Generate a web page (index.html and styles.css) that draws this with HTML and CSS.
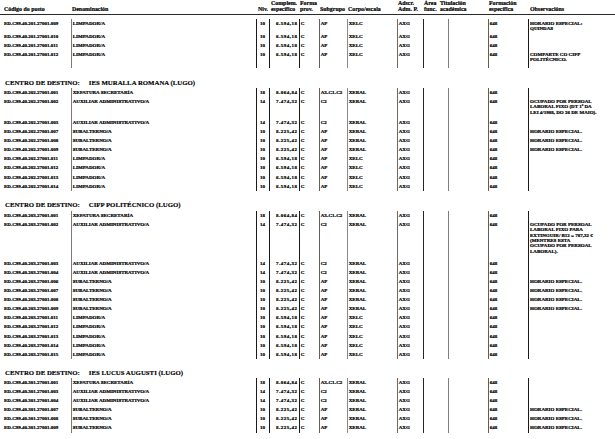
FILE: index.html
```html
<!DOCTYPE html>
<html lang="gl">
<head>
<meta charset="utf-8">
<title>Relación de postos</title>
<link rel="stylesheet" href="styles.css">
</head>
<body>
<div class="page">
  <table class="grid head">
    <colgroup><col class="c1"><col class="c2"><col class="c3"><col class="c4"><col class="c5"><col class="c6"><col class="c7"><col class="c8"><col class="c9"><col class="c10"><col class="c11"><col class="c12"></colgroup>
    <tr>
      <th class="t-code">Código do posto</th>
      <th class="t-den">Denominación</th>
      <th class="t-niv">Niv.</th>
      <th class="t-comp">Complem.<br>específico</th>
      <th class="t-forma">Forma<br>prov.</th>
      <th class="t-sub">Subgrupo</th>
      <th class="t-corpo">Corpo/escala</th>
      <th class="t-adscr">Adscr.<br>Adm. P.</th>
      <th class="t-area">Área<br>func.</th>
      <th class="t-tit">Titulación<br>académica</th>
      <th class="t-form">Formación<br>específica</th>
      <th class="t-obs">Observacións</th>
    </tr>
  </table>

  <section class="centro first">
    <table class="grid body">
      <colgroup><col class="c1"><col class="c2"><col class="c3"><col class="c4"><col class="c5"><col class="c6"><col class="c7"><col class="c8"><col class="c9"><col class="c10"><col class="c11"><col class="c12"></colgroup>
      <tr class="h13"><td>ED.C99.40.201.27001.009</td><td>LIMPADOR/A</td><td>10</td><td>6.594,18</td><td>C</td><td>AP</td><td>XELC</td><td>AXG</td><td></td><td></td><td>648</td><td>HORARIO ESPECIAL:<br>QUINDAS</td></tr>
      <tr><td>ED.C99.40.201.27001.010</td><td>LIMPADOR/A</td><td>10</td><td>6.594,18</td><td>C</td><td>AP</td><td>XELC</td><td>AXG</td><td></td><td></td><td>648</td><td></td></tr>
      <tr><td>ED.C99.40.201.27001.011</td><td>LIMPADOR/A</td><td>10</td><td>6.594,18</td><td>C</td><td>AP</td><td>XELC</td><td>AXG</td><td></td><td></td><td>648</td><td></td></tr>
      <tr class="h17"><td>ED.C99.40.201.27001.012</td><td>LIMPADOR/A</td><td>10</td><td>6.594,18</td><td>C</td><td>AP</td><td>XELC</td><td>AXG</td><td></td><td></td><td>648</td><td>COMPARTE CO CIFP<br>POLITÉCNICO.</td></tr>
    </table>
  </section>

  <section class="centro">
    <h2 class="centro-title">CENTRO DE DESTINO:<span class="centro-name">IES MURALLA ROMANA (LUGO)</span></h2>
    <table class="grid body">
      <colgroup><col class="c1"><col class="c2"><col class="c3"><col class="c4"><col class="c5"><col class="c6"><col class="c7"><col class="c8"><col class="c9"><col class="c10"><col class="c11"><col class="c12"></colgroup>
      <tr><td>ED.C99.40.202.27001.001</td><td>XEFATURA SECRETARÍA</td><td>18</td><td>8.064,84</td><td>C</td><td>A3-C1-C2</td><td>XERAL</td><td>AXG</td><td></td><td></td><td>648</td><td></td></tr>
      <tr class="h21"><td>ED.C99.40.202.27001.002</td><td>AUXILIAR ADMINISTRATIVO/A</td><td>14</td><td>7.474,32</td><td>C</td><td>C2</td><td>XERAL</td><td>AXG</td><td></td><td></td><td>648</td><td>OCUPADO POR PERSOAL<br>LABORAL FIXO (DT 1ª DA<br>LEI 4/1988, DO 26 DE MAIO).</td></tr>
      <tr><td>ED.C99.40.202.27001.003</td><td>AUXILIAR ADMINISTRATIVO/A</td><td>14</td><td>7.474,32</td><td>C</td><td>C2</td><td>XERAL</td><td>AXG</td><td></td><td></td><td>648</td><td></td></tr>
      <tr><td>ED.C99.40.202.27001.007</td><td>SUBALTERNO/A</td><td>10</td><td>8.225,42</td><td>C</td><td>AP</td><td>XERAL</td><td>AXG</td><td></td><td></td><td>648</td><td>HORARIO ESPECIAL.</td></tr>
      <tr><td>ED.C99.40.202.27001.008</td><td>SUBALTERNO/A</td><td>10</td><td>8.225,42</td><td>C</td><td>AP</td><td>XERAL</td><td>AXG</td><td></td><td></td><td>648</td><td>HORARIO ESPECIAL.</td></tr>
      <tr><td>ED.C99.40.202.27001.009</td><td>SUBALTERNO/A</td><td>10</td><td>8.225,42</td><td>C</td><td>AP</td><td>XERAL</td><td>AXG</td><td></td><td></td><td>648</td><td>HORARIO ESPECIAL.</td></tr>
      <tr><td>ED.C99.40.202.27001.011</td><td>LIMPADOR/A</td><td>10</td><td>6.594,18</td><td>C</td><td>AP</td><td>XELC</td><td>AXG</td><td></td><td></td><td>648</td><td></td></tr>
      <tr><td>ED.C99.40.202.27001.012</td><td>LIMPADOR/A</td><td>10</td><td>6.594,18</td><td>C</td><td>AP</td><td>XELC</td><td>AXG</td><td></td><td></td><td>648</td><td></td></tr>
      <tr><td>ED.C99.40.202.27001.013</td><td>LIMPADOR/A</td><td>10</td><td>6.594,18</td><td>C</td><td>AP</td><td>XELC</td><td>AXG</td><td></td><td></td><td>648</td><td></td></tr>
      <tr><td>ED.C99.40.202.27001.014</td><td>LIMPADOR/A</td><td>10</td><td>6.594,18</td><td>C</td><td>AP</td><td>XELC</td><td>AXG</td><td></td><td></td><td>648</td><td></td></tr>
    </table>
  </section>

  <section class="centro">
    <h2 class="centro-title">CENTRO DE DESTINO:<span class="centro-name">CIFP POLITÉCNICO (LUGO)</span></h2>
    <table class="grid body">
      <colgroup><col class="c1"><col class="c2"><col class="c3"><col class="c4"><col class="c5"><col class="c6"><col class="c7"><col class="c8"><col class="c9"><col class="c10"><col class="c11"><col class="c12"></colgroup>
      <tr><td>ED.C99.40.203.27001.001</td><td>XEFATURA SECRETARÍA</td><td>18</td><td>8.064,84</td><td>C</td><td>A3-C1-C2</td><td>XERAL</td><td>AXG</td><td></td><td></td><td>648</td><td></td></tr>
      <tr class="h39"><td>ED.C99.40.203.27001.002</td><td>AUXILIAR ADMINISTRATIVO/A</td><td>14</td><td>7.474,32</td><td>C</td><td>C2</td><td>XERAL</td><td>AXG</td><td></td><td></td><td>648</td><td>OCUPADO POR PERSOAL<br>LABORAL FIXO PARA<br>EXTINGUIR/ B12 = 787,32 €<br>(MENTRES ESTA<br>OCUPADO POR PERSOAL<br>LABORAL).</td></tr>
      <tr><td>ED.C99.40.203.27001.003</td><td>AUXILIAR ADMINISTRATIVO/A</td><td>14</td><td>7.474,32</td><td>C</td><td>C2</td><td>XERAL</td><td>AXG</td><td></td><td></td><td>648</td><td></td></tr>
      <tr><td>ED.C99.40.203.27001.004</td><td>AUXILIAR ADMINISTRATIVO/A</td><td>14</td><td>7.474,32</td><td>C</td><td>C2</td><td>XERAL</td><td>AXG</td><td></td><td></td><td>648</td><td></td></tr>
      <tr><td>ED.C99.40.203.27001.006</td><td>SUBALTERNO/A</td><td>10</td><td>8.225,42</td><td>C</td><td>AP</td><td>XERAL</td><td>AXG</td><td></td><td></td><td>648</td><td>HORARIO ESPECIAL.</td></tr>
      <tr><td>ED.C99.40.203.27001.007</td><td>SUBALTERNO/A</td><td>10</td><td>8.225,42</td><td>C</td><td>AP</td><td>XERAL</td><td>AXG</td><td></td><td></td><td>648</td><td>HORARIO ESPECIAL.</td></tr>
      <tr><td>ED.C99.40.203.27001.008</td><td>SUBALTERNO/A</td><td>10</td><td>8.225,42</td><td>C</td><td>AP</td><td>XERAL</td><td>AXG</td><td></td><td></td><td>648</td><td>HORARIO ESPECIAL.</td></tr>
      <tr><td>ED.C99.40.203.27001.009</td><td>SUBALTERNO/A</td><td>10</td><td>8.225,42</td><td>C</td><td>AP</td><td>XERAL</td><td>AXG</td><td></td><td></td><td>648</td><td>HORARIO ESPECIAL.</td></tr>
      <tr><td>ED.C99.40.203.27001.011</td><td>LIMPADOR/A</td><td>10</td><td>6.594,18</td><td>C</td><td>AP</td><td>XELC</td><td>AXG</td><td></td><td></td><td>648</td><td></td></tr>
      <tr><td>ED.C99.40.203.27001.012</td><td>LIMPADOR/A</td><td>10</td><td>6.594,18</td><td>C</td><td>AP</td><td>XELC</td><td>AXG</td><td></td><td></td><td>648</td><td></td></tr>
      <tr><td>ED.C99.40.203.27001.013</td><td>LIMPADOR/A</td><td>10</td><td>6.594,18</td><td>C</td><td>AP</td><td>XELC</td><td>AXG</td><td></td><td></td><td>648</td><td></td></tr>
      <tr><td>ED.C99.40.203.27001.014</td><td>LIMPADOR/A</td><td>10</td><td>6.594,18</td><td>C</td><td>AP</td><td>XELC</td><td>AXG</td><td></td><td></td><td>648</td><td></td></tr>
      <tr><td>ED.C99.40.203.27001.015</td><td>LIMPADOR/A</td><td>10</td><td>6.594,18</td><td>C</td><td>AP</td><td>XELC</td><td>AXG</td><td></td><td></td><td>648</td><td></td></tr>
    </table>
  </section>

  <section class="centro last">
    <h2 class="centro-title">CENTRO DE DESTINO:<span class="centro-name">IES LUCUS AUGUSTI (LUGO)</span></h2>
    <table class="grid body">
      <colgroup><col class="c1"><col class="c2"><col class="c3"><col class="c4"><col class="c5"><col class="c6"><col class="c7"><col class="c8"><col class="c9"><col class="c10"><col class="c11"><col class="c12"></colgroup>
      <tr><td>ED.C99.40.301.27001.001</td><td>XEFATURA SECRETARÍA</td><td>18</td><td>8.064,84</td><td>C</td><td>A3-C1-C2</td><td>XERAL</td><td>AXG</td><td></td><td></td><td>648</td><td></td></tr>
      <tr><td>ED.C99.40.301.27001.003</td><td>AUXILIAR ADMINISTRATIVO/A</td><td>14</td><td>7.474,32</td><td>C</td><td>C2</td><td>XERAL</td><td>AXG</td><td></td><td></td><td>648</td><td></td></tr>
      <tr><td>ED.C99.40.301.27001.004</td><td>AUXILIAR ADMINISTRATIVO/A</td><td>14</td><td>7.474,32</td><td>C</td><td>C2</td><td>XERAL</td><td>AXG</td><td></td><td></td><td>648</td><td></td></tr>
      <tr><td>ED.C99.40.301.27001.007</td><td>SUBALTERNO/A</td><td>10</td><td>8.225,42</td><td>C</td><td>AP</td><td>XERAL</td><td>AXG</td><td></td><td></td><td>648</td><td>HORARIO ESPECIAL.</td></tr>
      <tr><td>ED.C99.40.301.27001.008</td><td>SUBALTERNO/A</td><td>10</td><td>8.225,42</td><td>C</td><td>AP</td><td>XERAL</td><td>AXG</td><td></td><td></td><td>648</td><td>HORARIO ESPECIAL.</td></tr>
      <tr><td>ED.C99.40.301.27001.009</td><td>SUBALTERNO/A</td><td>10</td><td>8.225,42</td><td>C</td><td>AP</td><td>XERAL</td><td>AXG</td><td></td><td></td><td>648</td><td>HORARIO ESPECIAL.</td></tr>
    </table>
  </section>
</div>
</body>
</html>
```

FILE: styles.css
```css
html, body {
  margin: 0;
  padding: 0;
  background: #ffffff;
}

body {
  font-family: "Liberation Serif", "Times New Roman", serif;
  color: #000;
  overflow: hidden;
}

.page {
  width: 615px;
  height: 439px;
  overflow: hidden;
}

.grid {
  width: 615px;
  table-layout: fixed;
  border-collapse: collapse;
  border-spacing: 0;
}

.c1 { width: 71px; }
.c2 { width: 185px; }
.c3 { width: 13px; }
.c4 { width: 30px; }
.c5 { width: 20px; }
.c6 { width: 28px; }
.c7 { width: 50px; }
.c8 { width: 26px; }
.c9 { width: 25px; }
.c10 { width: 40px; }
.c11 { width: 40px; }
.c12 { width: 87px; }

/* Header */
.head {
  height: 14px;
  border-bottom: 1px solid #2a2a2a;
  margin-bottom: 4.5px;
}

.head th {
  font-size: 5.9px;
  line-height: 6.4px;
  font-weight: bold;
  text-align: left;
  vertical-align: bottom;
  padding: 0 0 0.8px 1px;
  white-space: nowrap;
  overflow: visible;
  -webkit-text-stroke: 0.2px #000;
}

.head .t-code { padding-left: 4px; }
.head .t-niv { padding-left: 2px; }
.head .t-comp { padding-left: 2px; }
.head .t-tit { padding-left: 0; position: relative; left: -8px; }
.head .t-form { padding-left: 1px; }
.head .t-obs { padding-left: 2px; }

/* Body rows */
.body tr {
  height: 9.1px;
}

.body tr.h13 { height: 13px; }
.body tr.h17 { height: 17.3px; }
.body tr.h21 { height: 21px; }
.body tr.h39 { height: 39px; }

.body td {
  font-size: 5px;
  line-height: 5.35px;
  font-weight: bold;
  vertical-align: top;
  padding: 1.8px 0 0 1.2px;
  white-space: nowrap;
  overflow: visible;
  border-left: 1px solid #7a7a7a;
  -webkit-text-stroke: 0.22px #000;
}

.body td:nth-child(1) {
  border-left: none;
  padding-left: 4px;
}

.body td:nth-child(3) {
  border-left-color: #1a1a1a;
  text-align: center;
  padding-left: 0;
}

.body td:nth-child(4) {
  border-left-color: #1a1a1a;
  text-align: right;
  padding-left: 0;
  padding-right: 1px;
  letter-spacing: 0.5px;
}

.body td:nth-child(5) { border-left-color: #1a1a1a; }
.body td:nth-child(6) { border-left-color: #606060; }
.body td:nth-child(7) { border-left-color: #8a8a8a; }
.body td:nth-child(8) { border-left-color: #6a6a6a; }
.body td:nth-child(9) { border-left-color: #262626; }
.body td:nth-child(10) { border-left-color: #7e7e7e; }
.body td:nth-child(11) { border-left-color: #5e5e5e; }
.body td:nth-child(12) { border-left-color: #1a1a1a; padding-left: 1.5px; }

/* Centre headings */
.centro-title {
  margin: 9.5px 0 0 0;
  height: 10.5px;
  line-height: 10.5px;
  font-size: 6.8px;
  font-weight: bold;
  padding-left: 5px;
  white-space: nowrap;
  -webkit-text-stroke: 0.15px #000;
}

.centro.first + .centro .centro-title {
  margin-top: 10px;
}

.centro.last .centro-title {
  margin-top: 8.5px;
}

.centro-name {
  padding-left: 9px;
}
```
